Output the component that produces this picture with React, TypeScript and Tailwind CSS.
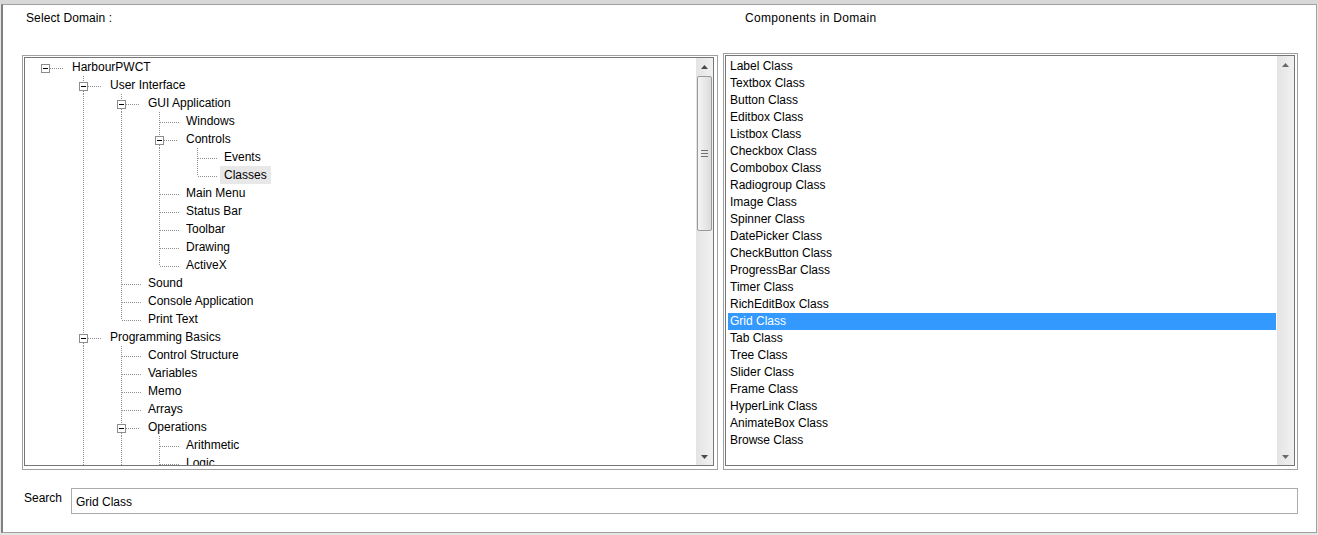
import React from 'react';

type TreeNode = {
    label: string;
    depth: number;
    expanded?: boolean;
    highlight?: boolean;
};

const treeNodes: TreeNode[] = [
    { label: 'HarbourPWCT', depth: 0, expanded: true },
    { label: 'User Interface', depth: 1, expanded: true },
    { label: 'GUI Application', depth: 2, expanded: true },
    { label: 'Windows', depth: 3 },
    { label: 'Controls', depth: 3, expanded: true },
    { label: 'Events', depth: 4 },
    { label: 'Classes', depth: 4, highlight: true },
    { label: 'Main Menu', depth: 3 },
    { label: 'Status Bar', depth: 3 },
    { label: 'Toolbar', depth: 3 },
    { label: 'Drawing', depth: 3 },
    { label: 'ActiveX', depth: 3 },
    { label: 'Sound', depth: 2 },
    { label: 'Console Application', depth: 2 },
    { label: 'Print Text', depth: 2 },
    { label: 'Programming Basics', depth: 1, expanded: true },
    { label: 'Control Structure', depth: 2 },
    { label: 'Variables', depth: 2 },
    { label: 'Memo', depth: 2 },
    { label: 'Arrays', depth: 2 },
    { label: 'Operations', depth: 2, expanded: true },
    { label: 'Arithmetic', depth: 3 },
    { label: 'Logic', depth: 3 },
];

const components = [
    'Label Class', 'Textbox Class', 'Button Class', 'Editbox Class', 'Listbox Class',
    'Checkbox Class', 'Combobox Class', 'Radiogroup Class', 'Image Class', 'Spinner Class',
    'DatePicker Class', 'CheckButton Class', 'ProgressBar Class', 'Timer Class', 'RichEditBox Class',
    'Grid Class', 'Tab Class', 'Tree Class', 'Slider Class', 'Frame Class',
    'HyperLink Class', 'AnimateBox Class', 'Browse Class',
];

const ROW_H = 18;
const MID = 10;
const LINE = '#8f8f8f';

// does the branch at level k still go on below row i?
// the tree is scrolled, so open branches at the end keep going
function continues(i: number, k: number) {
    for (let j = i + 1; j < treeNodes.length; j++) {
        if (treeNodes[j].depth <= k) return treeNodes[j].depth === k;
    }
    return k >= 1;
}

const colX = (d: number) => 20 + 38 * d;

function TreeLines({ index }: { index: number }) {
    const node = treeNodes[index];
    const d = node.depth;
    const hasBox = !!node.expanded;
    const w = 43 + 38 * d;
    const xc = colX(d) + 0.5;
    const parts: React.ReactNode[] = [];

    for (let k = 1; k < d; k++) {
        if (continues(index, k)) {
            const x = colX(k) + 0.5;
            parts.push(<line key={'a' + k} x1={x} y1={0} x2={x} y2={ROW_H} />);
        }
    }
    if (d >= 1) {
        parts.push(<line key="up" x1={xc} y1={0} x2={xc} y2={hasBox ? MID - 4 : MID} />);
        if (continues(index, d)) {
            parts.push(<line key="down" x1={xc} y1={hasBox ? MID + 5 : MID} x2={xc} y2={ROW_H} />);
        }
    }
    const hy = MID + 0.5;
    if (hasBox) {
        parts.push(<line key="h" x1={colX(d) + 5} y1={hy} x2={colX(d) + 19} y2={hy} />);
    } else {
        parts.push(<line key="h" x1={colX(d) + 1} y1={hy} x2={colX(d) + 21} y2={hy} />);
    }

    return (
        <svg width={w} height={ROW_H} className="shrink-0" shapeRendering="crispEdges">
            <g stroke={LINE} strokeWidth={1} strokeDasharray="1 1">{parts}</g>
            {hasBox && (
                <g>
                    <rect x={colX(d) - 4 + 0.5} y={MID - 4 + 0.5} width={8} height={8} fill="#fff" stroke="#8c8c8c" />
                    <line x1={colX(d) - 2} y1={MID + 0.5} x2={colX(d) + 3} y2={MID + 0.5} stroke="#000" />
                </g>
            )}
        </svg>
    );
}

function Arrow({ up, color }: { up?: boolean; color: string }) {
    return (
        <svg width="7" height="4" viewBox="0 0 7 4">
            {up
                ? <polygon points="3.5,0 7,4 0,4" fill={color} />
                : <polygon points="0,0 7,0 3.5,4" fill={color} />}
        </svg>
    );
}

function ScrollBar({ thumb }: { thumb: boolean }) {
    const arrowColor = thumb ? '#4a4a4a' : '#6a6a6a';
    return (
        <div className="w-[17px] h-full shrink-0 flex flex-col bg-linear-to-r from-[#e4e4e4] to-[#f1f1f1]">
            <div className="h-[17px] flex items-center justify-center">
                <Arrow up color={arrowColor} />
            </div>
            <div className="flex-1 flex flex-col">
                {thumb && (
                    <div className="mt-px h-[155px] mx-px rounded-[2px] border border-[#9a9a9a] bg-linear-to-r from-[#f5f5f5] to-[#dcdcdc] flex flex-col items-center justify-center gap-[2px]">
                        <div className="w-[7px] h-px bg-[#707070]" />
                        <div className="w-[7px] h-px bg-[#707070]" />
                        <div className="w-[7px] h-px bg-[#707070]" />
                    </div>
                )}
            </div>
            <div className="h-[17px] flex items-center justify-center">
                <Arrow color={arrowColor} />
            </div>
        </div>
    );
}

export default function App() {
    return (
        <div className="w-[1318px] h-[535px] bg-[#e6e6e6] flex flex-col overflow-hidden font-['Liberation_Sans',Arial,sans-serif] text-[12px] text-black">
            <div className="h-[4px] bg-[#d8d8d8] shrink-0" />
            <div className="ml-px w-[1316px] h-[529px] shrink-0 bg-white border-t border-[#a0a0a0] border-l-2 border-l-[#808080] border-r border-r-[#a0a0a0] border-b border-b-[#a0a0a0] flex flex-col">
                {/* lists */}
                <div className="flex items-start pt-[6px]">
                    <div className="ml-[19px] w-[696px] flex flex-col">
                        <div className="h-[14px] leading-[14px] pl-[4px] tracking-[0.1px]">Select Domain :</div>
                        <div className="mt-[30px] h-[415px] border border-[#a0a0a0] pt-px pl-px pr-[3px] pb-[3px]">
                            <div className="h-full border border-[#767676] flex">
                                <div className="flex-1 overflow-hidden">
                                    {treeNodes.map((n, i) => (
                                        <div key={i} className="flex h-[18px] items-stretch">
                                            <TreeLines index={i} />
                                            <span className={`px-[4px] leading-[18px] whitespace-nowrap ${n.highlight ? 'bg-[#e8e8e8]' : ''}`}>
                                                {n.label}
                                            </span>
                                        </div>
                                    ))}
                                </div>
                                <ScrollBar thumb />
                            </div>
                        </div>
                    </div>

                    <div className="ml-[5px] w-[575px] flex flex-col">
                        <div className="h-[14px] leading-[14px] pl-[22px] tracking-[0.3px]">Components in Domain</div>
                        <div className="mt-[28px] h-[417px] border border-[#a0a0a0] pt-px pl-px pr-[2px] pb-[3px]">
                            <div className="h-full border border-[#767676] flex">
                                <div className="flex-1 overflow-hidden pt-[2px]">
                                    {components.map((c) => (
                                        <div
                                            key={c}
                                            className={`ml-[2px] mr-px h-[17px] leading-[17px] pl-[2px] whitespace-nowrap ${c === 'Grid Class' ? 'bg-[#3399ff] text-white' : ''}`}
                                        >
                                            {c}
                                        </div>
                                    ))}
                                </div>
                                <ScrollBar thumb={false} />
                            </div>
                        </div>
                    </div>
                </div>

                {/* search */}
                <div className="mt-[18px] flex items-start">
                    <div className="ml-[21px] mt-[3px] w-[47px] h-[14px] leading-[14px]">Search</div>
                    <div className="w-[1227px] h-[26px] border border-[#ababab] flex items-center pl-[4px] pt-px">
                        Grid Class
                    </div>
                </div>
            </div>
        </div>
    );
}
